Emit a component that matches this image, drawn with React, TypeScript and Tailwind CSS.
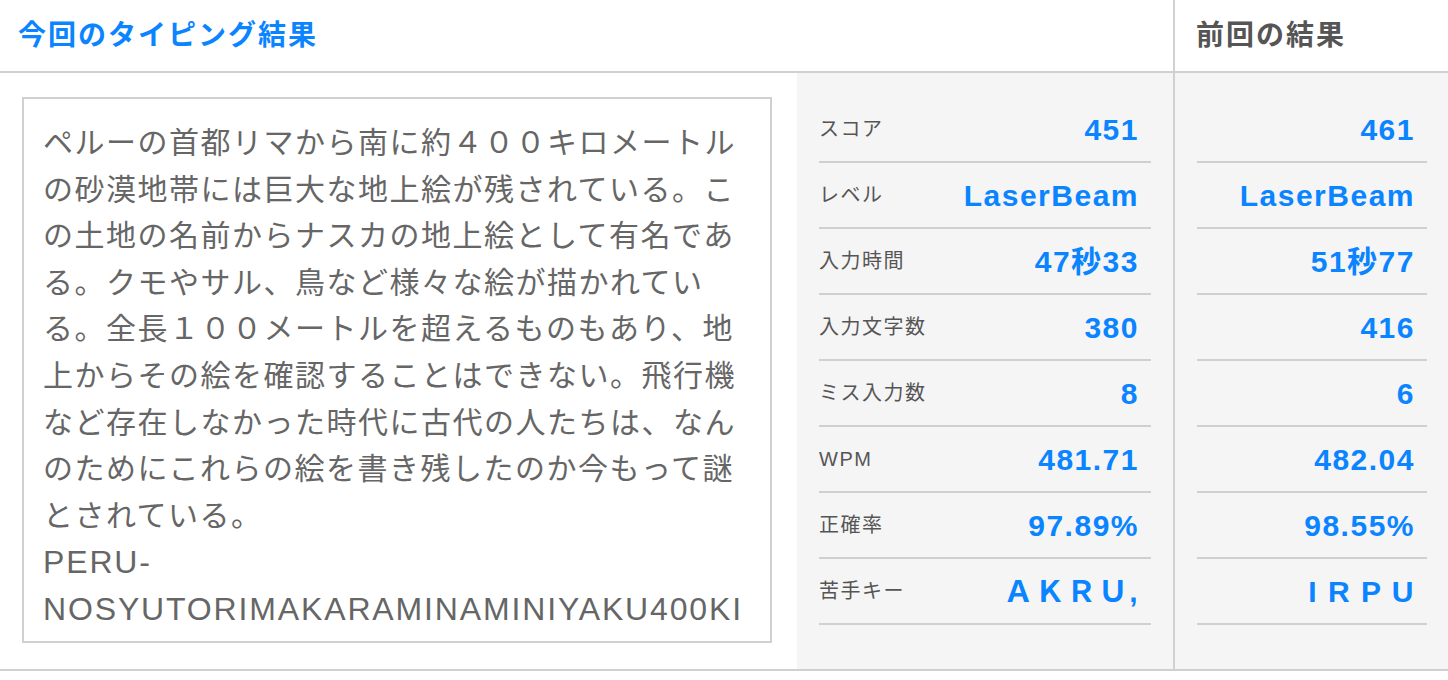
import React from "react";

const jp = "font-['Liberation_Sans','Noto_Sans_CJK_JP',sans-serif]";

const passage = [
  "ペルーの首都リマから南に約４００キロメートル",
  "の砂漠地帯には巨大な地上絵が残されている。こ",
  "の土地の名前からナスカの地上絵として有名であ",
  "る。クモやサル、鳥など様々な絵が描かれてい",
  "る。全長１００メートルを超えるものもあり、地",
  "上からその絵を確認することはできない。飛行機",
  "など存在しなかった時代に古代の人たちは、なん",
  "のためにこれらの絵を書き残したのか今もって謎",
  "とされている。",
];

const romaji = ["PERU-", "NOSYUTORIMAKARAMINAMINIYAKU400KI"];

const stats = [
  { label: "スコア", now: "451", prev: "461" },
  { label: "レベル", now: "LaserBeam", prev: "LaserBeam" },
  { label: "入力時間", now: "47秒33", prev: "51秒77" },
  { label: "入力文字数", now: "380", prev: "416" },
  { label: "ミス入力数", now: "8", prev: "6" },
  { label: "WPM", now: "481.71", prev: "482.04" },
  { label: "正確率", now: "97.89%", prev: "98.55%" },
  { label: "苦手キー", now: "ＡＫＲＵ,", prev: "I R P U" },
];

export default function App() {
  return (
    <div className={`w-[1448px] h-[680px] bg-white ${jp}`}>
      <div className="flex h-[73px] border-b-2 border-[#d0d0d0]">
        <div className="w-[1173px] pl-[18px] flex items-center text-[28px] font-bold tracking-[2px] text-[#0a84ff]">
          今回のタイピング結果
        </div>
        <div className="flex-1 border-l-2 border-[#d0d0d0] pl-[21px] flex items-center text-[28px] font-bold tracking-[2px] text-[#555]">
          前回の結果
        </div>
      </div>

      <div className="flex h-[598px] border-b-2 border-[#d0d0d0]">
        <div className="w-[797px] pt-[24px] pl-[22px] pr-[25px]">
          <div className="h-[546px] border-2 border-[#d0d0d0] overflow-hidden pt-[21px] pl-[19px] text-[#666]">
            {passage.map((line, i) => (
              <div key={i} className="whitespace-nowrap text-[30px] leading-[46.6px] tracking-[1.5px]">
                {line}
              </div>
            ))}
            {romaji.map((line, i) => (
              <div key={i} className="whitespace-nowrap text-[32px] leading-[46.6px] tracking-[1.85px]">
                {line}
              </div>
            ))}
          </div>
        </div>

        <div className="w-[376px] bg-[#f5f5f5] pt-[24px] px-[22px]">
          {stats.map((s) => (
            <div key={s.label} className="h-[66px] flex items-center justify-between border-b-2 border-[#d0d0d0] pr-[12px]">
              <span className="text-[20px] tracking-[1.5px] text-[#555]">{s.label}</span>
              <span className="text-[30px] font-bold tracking-[1.5px] text-[#0a84ff] whitespace-pre">{s.now}</span>
            </div>
          ))}
        </div>

        <div className="flex-1 border-l-2 border-[#d0d0d0] bg-[#f5f5f5] pt-[24px] pl-[22px] pr-[21px]">
          {stats.map((s) => (
            <div key={s.label} className="h-[66px] flex items-center justify-end border-b-2 border-[#d0d0d0] pr-[12px]">
              <span className="text-[30px] font-bold tracking-[1.5px] text-[#0a84ff] whitespace-pre">{s.prev}</span>
            </div>
          ))}
        </div>
      </div>
    </div>
  );
}
